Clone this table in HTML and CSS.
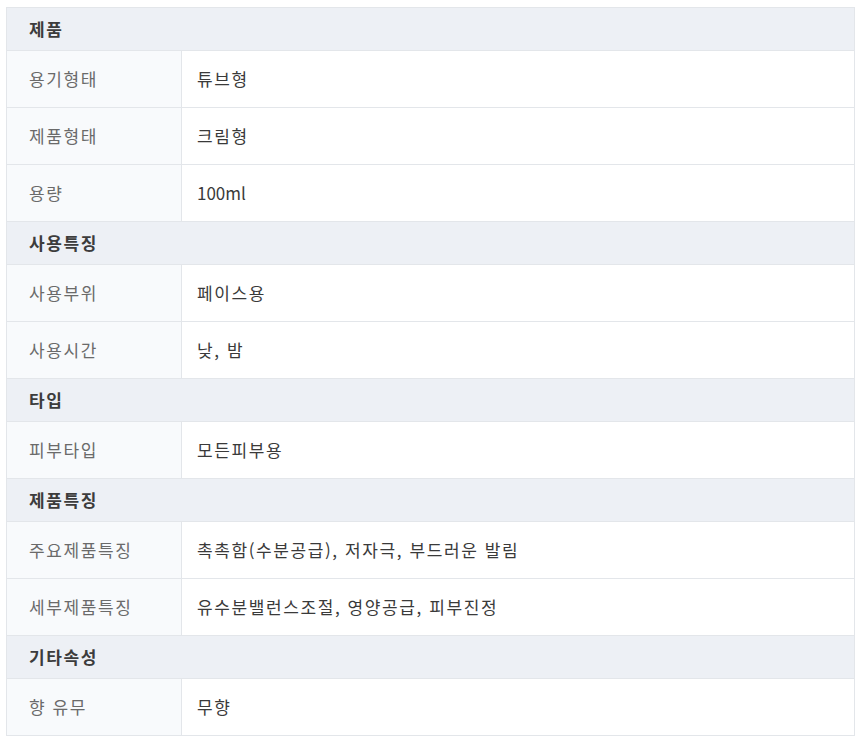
FILE: index.html
```html
<!DOCTYPE html>
<html lang="ko">
<head>
<meta charset="utf-8">
<link rel="stylesheet" href="styles.css">
</head>
<body>
<table class="spec">
  <colgroup><col class="c1"><col class="c2"></colgroup>
  <tbody>
    <tr class="sec"><th colspan="2">제품</th></tr>
    <tr><td class="lbl">용기형태</td><td class="val">튜브형</td></tr>
    <tr><td class="lbl">제품형태</td><td class="val">크림형</td></tr>
    <tr><td class="lbl">용량</td><td class="val"><span class="latin">100ml</span></td></tr>
    <tr class="sec"><th colspan="2">사용특징</th></tr>
    <tr><td class="lbl">사용부위</td><td class="val">페이스용</td></tr>
    <tr><td class="lbl">사용시간</td><td class="val">낮, 밤</td></tr>
    <tr class="sec"><th colspan="2">타입</th></tr>
    <tr><td class="lbl">피부타입</td><td class="val">모든피부용</td></tr>
    <tr class="sec"><th colspan="2">제품특징</th></tr>
    <tr><td class="lbl">주요제품특징</td><td class="val">촉촉함(수분공급), 저자극, 부드러운 발림</td></tr>
    <tr><td class="lbl">세부제품특징</td><td class="val">유수분밸런스조절, 영양공급, 피부진정</td></tr>
    <tr class="sec"><th colspan="2">기타속성</th></tr>
    <tr><td class="lbl">향 유무</td><td class="val">무향</td></tr>
  </tbody>
</table>
</body>
</html>
```
FILE: styles.css
```css
html, body {
  margin: 0;
  padding: 0;
  background: #ffffff;
}
body {
  padding: 7px 5px 0 6px;
  font-family: "Noto Sans CJK KR", "Noto Sans", sans-serif;
}
.spec {
  width: 849px;
  border-collapse: collapse;
  border: 1px solid #e3e6ea;
  table-layout: fixed;
}
.c1 { width: 175px; }
.c2 { width: auto; }
.spec td, .spec th {
  border: 1px solid #e3e6ea;
  vertical-align: middle;
  text-align: left;
  font-size: 17px;
  line-height: 20px;
  letter-spacing: 1.6px;
}
.sec th {
  height: 42px;
  padding: 0 0 0 22px;
  background: #edf0f5;
  color: #3c3c3c;
  font-weight: 700;
}
.lbl {
  height: 56px;
  padding: 0 0 0 22px;
  background: #f8fafc;
  color: #6a6a6a;
  font-weight: 400;
}
.val {
  padding: 0 0 0 15px;
  background: #ffffff;
  color: #3a3a3a;
}
.latin {
  letter-spacing: 0;
}
```
